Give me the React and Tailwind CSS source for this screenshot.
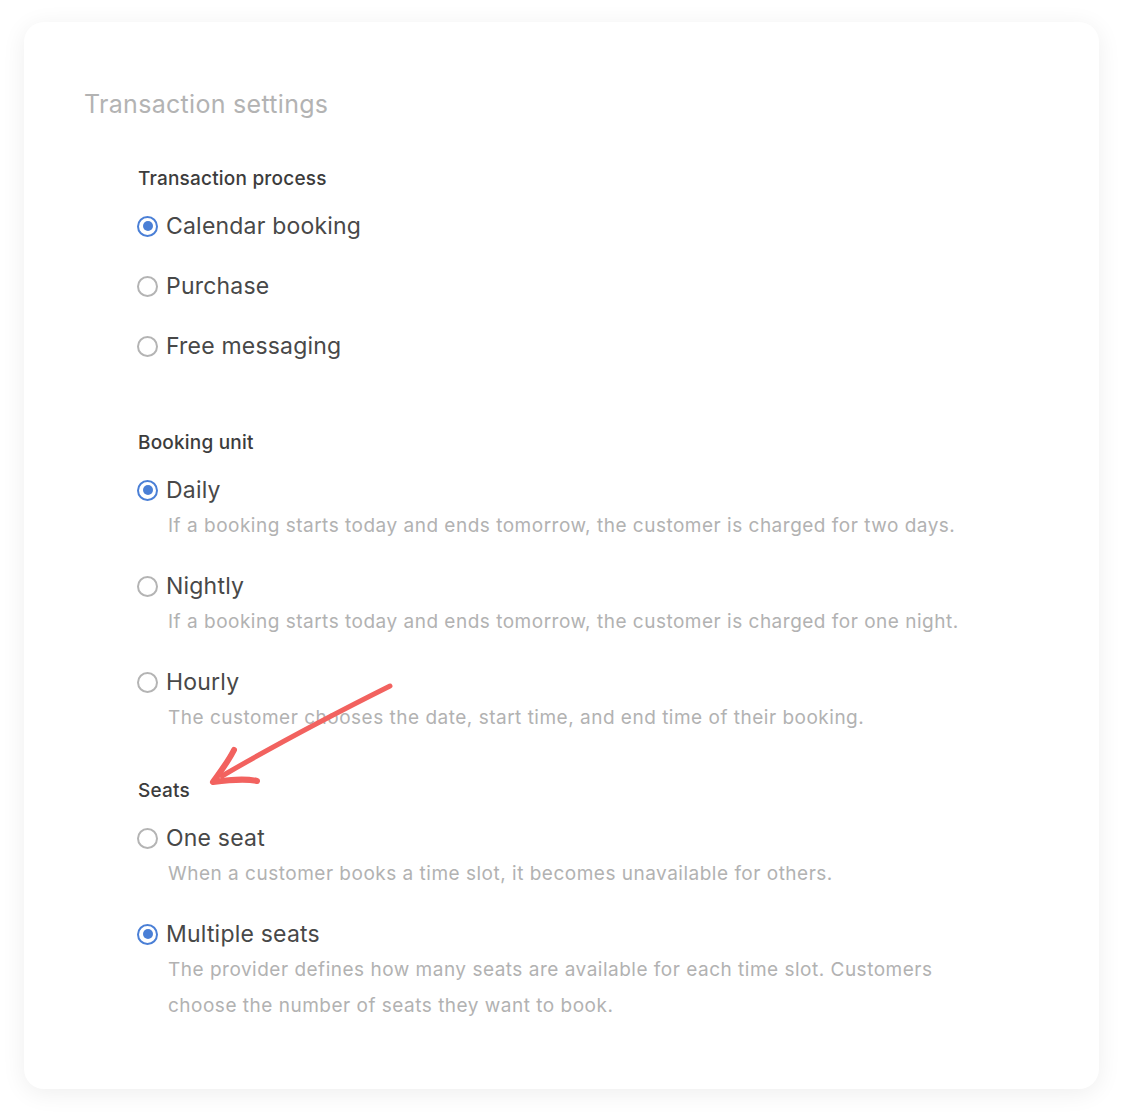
import React from 'react';

const sections = [
  {
    title: 'Transaction process',
    gapAfter: 'mb-[67px]',
    options: [
      { label: 'Calendar booking', checked: true },
      { label: 'Purchase' },
      { label: 'Free messaging' },
    ],
  },
  {
    title: 'Booking unit',
    gapAfter: 'mb-[43px]',
    options: [
      {
        label: 'Daily',
        checked: true,
        description: 'If a booking starts today and ends tomorrow, the customer is charged for two days.',
      },
      {
        label: 'Nightly',
        description: 'If a booking starts today and ends tomorrow, the customer is charged for one night.',
      },
      {
        label: 'Hourly',
        description: 'The customer chooses the date, start time, and end time of their booking.',
      },
    ],
  },
  {
    title: 'Seats',
    gapAfter: '',
    options: [
      {
        label: 'One seat',
        description: 'When a customer books a time slot, it becomes unavailable for others.',
      },
      {
        label: 'Multiple seats',
        checked: true,
        description:
          'The provider defines how many seats are available for each time slot. Customers choose the number of seats they want to book.',
      },
    ],
  },
];

const Radio = ({ checked }) =>
  checked ? (
    <span className="flex h-[21px] w-[21px] shrink-0 items-center justify-center rounded-full border-[2.5px] border-[#4a7fd6]">
      <span className="h-[10px] w-[10px] rounded-full bg-[#4a7fd6]" />
    </span>
  ) : (
    <span className="h-[21px] w-[21px] shrink-0 rounded-full border-[2px] border-[#b4b4b4]" />
  );

const Option = ({ label, checked, description }) => (
  <div>
    <div className="flex h-9 items-center gap-[8px] -ml-px">
      <Radio checked={checked} />
      <span className="text-[23px] leading-9 tracking-[0.2px] text-[#484848]">{label}</span>
    </div>
    {description && (
      <p className="ml-[30px] max-w-[800px] text-[19px] leading-9 tracking-[0.5px] text-[#b2b2b2]">
        {description}
      </p>
    )}
  </div>
);

const Arrow = () => (
  <svg
    className="pointer-events-none absolute left-0 top-0"
    width="1124"
    height="1115"
    viewBox="0 0 1124 1115"
    fill="none"
  >
    <path
      d="M390 686 C330 716 270 748 222 776"
      stroke="#f2625f"
      strokeWidth="5"
      strokeLinecap="round"
    />
    <path
      d="M234 750 C228 762 220 772 213 782 C228 780 244 778 257 781"
      stroke="#f2625f"
      strokeWidth="6"
      strokeLinecap="round"
      strokeLinejoin="round"
    />
  </svg>
);

export default function App() {
  return (
    <div className="relative min-h-[1115px] bg-white pl-6 pr-[25px] pt-[22px] font-['Inter',sans-serif]">
      <div className="rounded-[20px] bg-white pb-[65px] pl-[60px] pt-[88px] shadow-[0_4px_24px_rgba(0,0,0,0.07)]">
        <h1 className="-mt-[22px] text-[25px] leading-8 tracking-[0.3px] text-[#b3b3b3]">Transaction settings</h1>

        <div className="ml-[54px] mt-[47px]">
          {sections.map((section) => (
            <div key={section.title} className={section.gapAfter}>
              <h2 className="text-[19px] font-medium leading-6 tracking-[0.2px] text-[#3c3c3c]">{section.title}</h2>
              <div className="mt-[17px] flex flex-col gap-6">
                {section.options.map((opt) => (
                  <Option key={opt.label} {...opt} />
                ))}
              </div>
            </div>
          ))}
        </div>
      </div>
      <Arrow />
    </div>
  );
}
